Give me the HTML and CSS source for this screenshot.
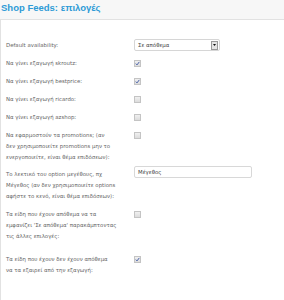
FILE: index.html
```html
<!DOCTYPE html>
<html>
<head>
<meta charset="utf-8">
<link rel="stylesheet" href="styles.css">
</head>
<body>
<div class="header"><h1 class="title">Shop Feeds: επιλογές</h1></div>
<div class="panel">
  <div class="row row-select">
    <div class="label">Default availability:</div>
    <div class="control">
      <div class="select"><span class="select-text">Σε απόθεμα</span><span class="select-btn"><svg width="3" height="2" viewBox="0 0 3 2"><path d="M0 0H3L1.5 2Z" fill="#111"/></svg></span></div>
    </div>
  </div>
  <div class="row">
    <div class="label">Να γίνει εξαγωγή skroutz:</div>
    <div class="control"><span class="cb checked"><svg width="5" height="5" viewBox="0 0 5 5"><path d="M0.8 2.6L2 3.9L4.3 0.9" fill="none" stroke="#4a62a8" stroke-width="1"/></svg></span></div>
  </div>
  <div class="row">
    <div class="label">Να γίνει εξαγωγή bestprice:</div>
    <div class="control"><span class="cb checked"><svg width="5" height="5" viewBox="0 0 5 5"><path d="M0.8 2.6L2 3.9L4.3 0.9" fill="none" stroke="#4a62a8" stroke-width="1"/></svg></span></div>
  </div>
  <div class="row">
    <div class="label">Να γίνει εξαγωγή ricardo:</div>
    <div class="control"><span class="cb"></span></div>
  </div>
  <div class="row">
    <div class="label">Να γίνει εξαγωγή azshop:</div>
    <div class="control"><span class="cb"></span></div>
  </div>
  <div class="row">
    <div class="label">Να εφαρμοστούν τα promotions; (αν<br>δεν χρησιμοποιείτε promotions μην το<br>ενεργοποιείτε, είναι θέμα επιδόσεων):</div>
    <div class="control"><span class="cb"></span></div>
  </div>
  <div class="row row-input">
    <div class="label label-pad">Το λεκτικό του option μεγέθους, πχ<br>Μέγεθος (αν δεν χρησιμοποιείτε options<br>αφήστε το κενό, είναι θέμα επιδόσεων):</div>
    <div class="control"><div class="text-input">Μέγεθος</div></div>
  </div>
  <div class="row">
    <div class="label">Τα είδη που έχουν απόθεμα να τα<br>εμφανίζει 'Σε απόθεμα' παρακάμπτοντας<br>τις άλλες επιλογές:</div>
    <div class="control"><span class="cb"></span></div>
  </div>
  <div class="row row-last">
    <div class="label">Τα είδη που έχουν δεν έχουν απόθεμα<br>να τα εξαιρεί από την εξαγωγή:</div>
    <div class="control"><span class="cb checked"><svg width="5" height="5" viewBox="0 0 5 5"><path d="M0.8 2.6L2 3.9L4.3 0.9" fill="none" stroke="#4a62a8" stroke-width="1"/></svg></span></div>
  </div>
</div>
</body>
</html>
```
FILE: styles.css
```css
html, body {
  margin: 0;
  padding: 0;
  background: #ffffff;
  height: 100%;
}
body {
  display: flex;
  flex-direction: column;
  font-family: "DejaVu Sans", Verdana, sans-serif;
}
.header {
  height: 20px;
  background: #f7f7f7;
  border-bottom: 1px solid #e2e2e2;
  box-sizing: border-box;
}
.title {
  margin: 0;
  padding: 2px 0 0 1px;
  font-family: "Liberation Sans", Arial, sans-serif;
  font-size: 9.5px;
  line-height: 11px;
  font-weight: bold;
  color: #2e9bd6;
}
.panel {
  flex: 1;
  border-left: 1px solid #e2e2e2;
  padding: 19px 0 0 5px;
}
.row {
  display: grid;
  grid-template-columns: 128px auto;
  margin-top: 7px;
}
.row-select {
  margin-top: 0;
  align-items: center;
}
.row-input {
  margin-top: 3px;
}
.row-last {
  margin-top: 12px;
}
.label {
  font-size: 5.4px;
  line-height: 11px;
  color: #666666;
  white-space: nowrap;
}
.label-pad {
  padding-top: 3px;
}
.control {
  display: flex;
  align-items: flex-start;
}
.cb {
  box-sizing: border-box;
  width: 7px;
  height: 7px;
  margin-top: 2px;
  border: 1px solid #c4c4c4;
  background: linear-gradient(#f0f0f0, #dcdcdc);
  display: flex;
  align-items: center;
  justify-content: center;
}
.cb svg {
  display: block;
}
.select {
  box-sizing: border-box;
  width: 86px;
  height: 12px;
  border: 1px solid #d6d6d6;
  border-radius: 2px;
  display: flex;
  align-items: center;
  justify-content: space-between;
  padding: 0 1px 0 3px;
}
.select-text {
  font-size: 5.4px;
  color: #444;
}
.select-btn {
  box-sizing: border-box;
  width: 7px;
  height: 9px;
  border: 1px solid #9a9a9a;
  background: #e4e4e4;
  display: flex;
  align-items: center;
  justify-content: center;
}
.select-btn svg {
  display: block;
}
.text-input {
  box-sizing: border-box;
  width: 118px;
  height: 12px;
  border: 1px solid #d8d8d8;
  border-radius: 2px;
  padding: 0 3px;
  font-size: 5.4px;
  line-height: 10px;
  color: #444;
}
```
